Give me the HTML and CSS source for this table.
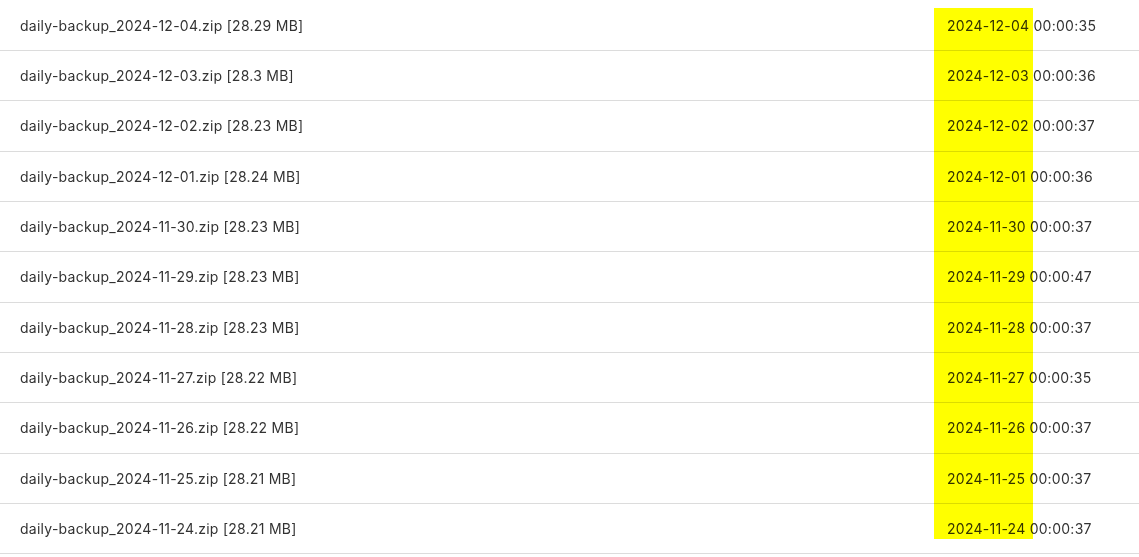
FILE: index.html
```html
<!DOCTYPE html>
<html>
<head>
<meta charset="utf-8">
<link rel="stylesheet" href="styles.css">
</head>
<body>
<div class="list">
  <div class="row"><span class="name">daily-backup_2024-12-04.zip [28.29 MB]</span><span class="date">2024-12-04 00:00:35</span></div>
  <div class="row"><span class="name">daily-backup_2024-12-03.zip [28.3 MB]</span><span class="date">2024-12-03 00:00:36</span></div>
  <div class="row"><span class="name">daily-backup_2024-12-02.zip [28.23 MB]</span><span class="date">2024-12-02 00:00:37</span></div>
  <div class="row"><span class="name">daily-backup_2024-12-01.zip [28.24 MB]</span><span class="date">2024-12-01 00:00:36</span></div>
  <div class="row"><span class="name">daily-backup_2024-11-30.zip [28.23 MB]</span><span class="date">2024-11-30 00:00:37</span></div>
  <div class="row"><span class="name">daily-backup_2024-11-29.zip [28.23 MB]</span><span class="date">2024-11-29 00:00:47</span></div>
  <div class="row"><span class="name">daily-backup_2024-11-28.zip [28.23 MB]</span><span class="date">2024-11-28 00:00:37</span></div>
  <div class="row"><span class="name">daily-backup_2024-11-27.zip [28.22 MB]</span><span class="date">2024-11-27 00:00:35</span></div>
  <div class="row"><span class="name">daily-backup_2024-11-26.zip [28.22 MB]</span><span class="date">2024-11-26 00:00:37</span></div>
  <div class="row"><span class="name">daily-backup_2024-11-25.zip [28.21 MB]</span><span class="date">2024-11-25 00:00:37</span></div>
  <div class="row"><span class="name">daily-backup_2024-11-24.zip [28.21 MB]</span><span class="date">2024-11-24 00:00:37</span></div>
  <div class="highlight"></div>
</div>
</body>
</html>
```

FILE: styles.css
```css
html, body {
  margin: 0;
  padding: 0;
  background: #ffffff;
}

body {
  font-family: Inter, "Liberation Sans", sans-serif;
  font-size: 14px;
  letter-spacing: 0.26px;
  color: #333333;
}

.list {
  position: relative;
  padding-top: 0.5px;
}

.row {
  display: grid;
  grid-template-columns: 1fr 192px;
  padding: 16px 0 16px 20px;
  line-height: 17.36px;
  border-bottom: 1px solid #dcdcdc;
}

.name,
.date {
  white-space: nowrap;
}

.highlight {
  position: absolute;
  left: 934px;
  top: 8px;
  width: 99px;
  height: 531px;
  background: #ffff00;
  mix-blend-mode: multiply;
  pointer-events: none;
}
```
